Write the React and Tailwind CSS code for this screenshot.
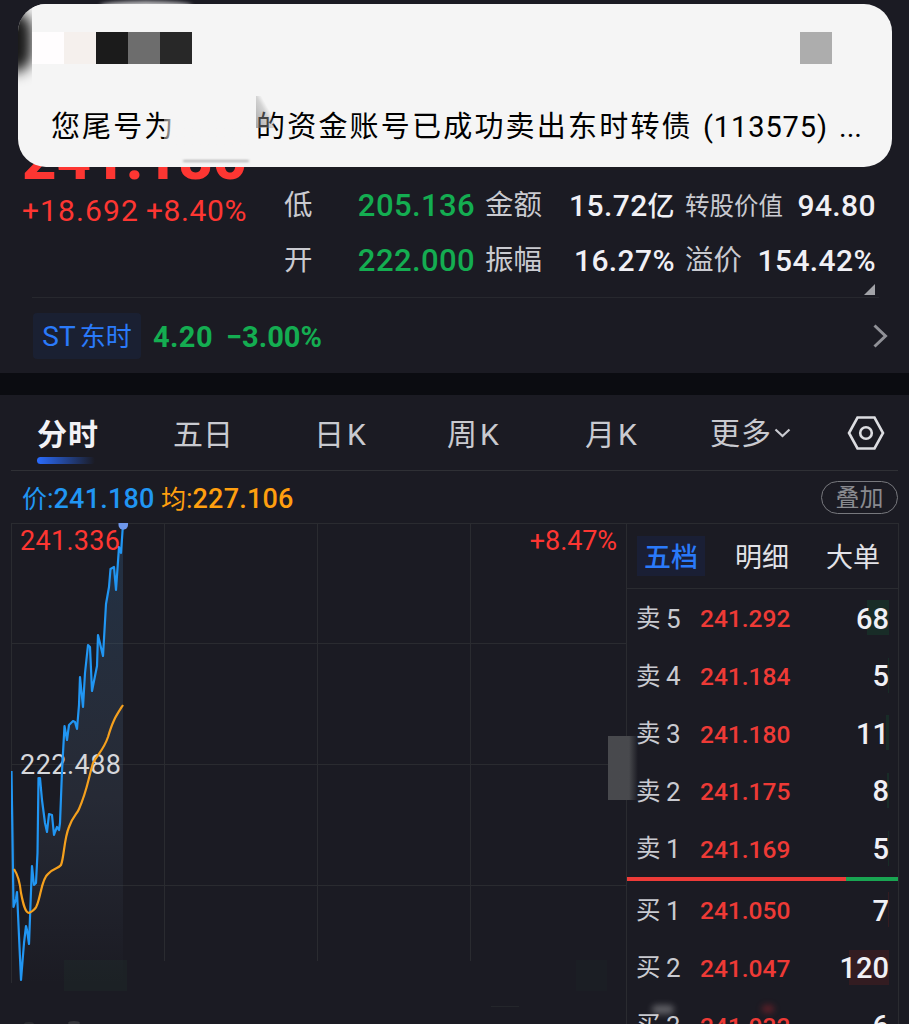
import React from 'react';
import clsx from 'clsx';

const quoteRows = [
  [
    { label: '低', value: '205.136', green: true },
    { label: '金额', value: '15.72', unit: '亿' },
    { label: '转股价值', value: '94.80', small: true },
  ],
  [
    { label: '开', value: '222.000', green: true },
    { label: '振幅', value: '16.27%' },
    { label: '溢价', value: '154.42%' },
  ],
];

const tabs = [
  { label: '分时', width: 'w-[136px]', active: true },
  { label: '五日', width: 'w-[141px]' },
  { label: '日K', width: 'w-[133px]', latin: true },
  { label: '周K', width: 'w-[138px]', latin: true },
  { label: '月K', width: 'w-[125px]', latin: true },
];

const sellOrders = [
  { side: '卖', level: 5, price: '241.292', qty: 68, depth: 22 },
  { side: '卖', level: 4, price: '241.184', qty: 5, depth: 1 },
  { side: '卖', level: 3, price: '241.180', qty: 11, depth: 3 },
  { side: '卖', level: 2, price: '241.175', qty: 8, depth: 2 },
  { side: '卖', level: 1, price: '241.169', qty: 5, depth: 1 },
];

const buyOrders = [
  { side: '买', level: 1, price: '241.050', qty: 7, depth: 1 },
  { side: '买', level: 2, price: '241.047', qty: 120, depth: 40 },
  { side: '买', level: 3, price: '241.032', qty: 6, depth: 0 },
];

// Chart coordinates are relative to the chart's top left corner
const priceLine =
  '0.5,248 2.5,384 5,376 6,369 10,457 13,420 15,403 16,407 18,421 20,368 21,343 23,362 25,360 26.5,330 27.5,255 29,255 31,277 34,300 36,309 38,291 41,292 43,312 44,309 46,304 48,307 49,300 51,248 53.5,203 56,217 58,202 62,198 64,199 66,206 68,182 69,154 72,184 74,150 77,122 79,124 81,168 86,143 87,112 92,133 95,81 98,64 99.5,46 103,44 105,67 108,24 110,30 112,1';

const averageLine =
  'M3,346 C7,352 9,360 10,370 C12,380 14,390 18,390 C22,388 25,386 26,382 C30,372 31,355 37,351 C42,345 47,346 50,342 C53,335 53,316 58,304 C62,293 66,291 68,286 C76,268 77,257 82,240 C87,231 93,226 97,214 C102,197 105,193 112,182';

const Notification = () => (
  <div className="absolute left-[18px] top-[4px] z-10 h-[163px] w-[874px] overflow-hidden rounded-[28px] bg-[#f5f5f5] text-black">
    <div className="absolute -left-[22px] top-[8px] h-[60px] w-[36px] rounded-full bg-black/90 blur-[7px]" />
    <div className="absolute left-[14px] top-0 h-[90px] w-[24px] bg-[#f5f5f5]" />
    <div className="absolute left-[165px] top-[156px] h-[1.5px] w-[66px] rounded-full bg-neutral-500/50 blur-[1px]" />
    <div className="relative flex items-start justify-between pl-[14px] pr-[60px] pt-[28px]">
      <div className="flex">
        <div className="size-8 bg-[#fffdfe]" />
        <div className="size-8 bg-[#f5f0ed]" />
        <div className="size-8 bg-[#1b1b1b]" />
        <div className="size-8 bg-[#6d6d6d]" />
        <div className="size-8 bg-[#282828]" />
      </div>
      <div className="size-8 bg-[#adadad]" />
    </div>
    <div className="relative mt-[43px] flex whitespace-nowrap pl-[33px] text-[29px] leading-[40px]">
      <span className="w-[205px] tracking-[2.1px]">您尾号为</span>
      <span className="w-[447px] tracking-[2.2px]">的资金账号已成功卖出东时转债</span>
      <span className="w-[136px] tracking-[0.9px]">(113575)</span>
      <span>...</span>
    </div>
    <div className="absolute left-[146px] top-[110px] h-[32px] w-[92px] bg-linear-to-r from-[#f5f5f5]/40 to-[#f5f5f5] to-20%" />
    <div className="absolute left-[238px] top-[92px] h-[32px] w-[18px] bg-linear-to-tr from-neutral-500/60 via-neutral-400/40 to-transparent to-65%" />
  </div>
);

const Header = () => (
  <div className="h-[373px]">
    <div className="flex h-[297px]">
      <div className="w-[284px] whitespace-nowrap pl-[22px] pt-[129px] text-[#fd3632]">
        <div className="text-[60px] font-extrabold leading-[60px]">241.180</div>
        <div className="mt-[6px] flex text-[30px] leading-8">
          <span className="w-[124px] tracking-[1.1px]">+18.692</span>
          <span className="tracking-[0.6px]">+8.40%</span>
        </div>
      </div>
      <div className="pt-[178px]">
        {quoteRows.map((row, i) => (
          <div key={i} className="grid h-[55px] grid-cols-[191px_200px_201px] text-[31px] leading-[55px]">
            {row.map((item) => (
              <div key={item.label} className="flex items-baseline justify-between whitespace-nowrap not-first:pl-[10px]">
                <span className={clsx('relative -top-px text-[#c9cad0]', item.small ? 'text-[24.5px]' : 'text-[28.5px]')}>
                  {item.label}
                </span>
                <span
                  className={clsx(
                    'font-medium',
                    item.green ? 'tracking-[0.4px] text-[#14ad51]' : 'text-[30px] tracking-[0.4px] text-[#f0f0f5]'
                  )}
                >
                  {item.value}
                  {item.unit && <span className="text-[27px]">{item.unit}</span>}
                </span>
              </div>
            ))}
          </div>
        ))}
      </div>
    </div>
    <div className="ml-8 mr-[30px] flex h-px justify-end bg-[#27282e]">
      <svg className="-mt-[13px] mr-1 size-[11px] shrink-0" viewBox="0 0 11 11">
        <path d="M11 0V11H0Z" fill="#a2a3a8" />
      </svg>
    </div>
    <div className="flex h-[75px] items-center pl-[33px] pr-[21px]">
      <div className="flex h-[46px] w-[108px] items-center justify-center gap-1 rounded bg-[#1a2032] pt-[3px] text-[26px] text-[#2a7afa]">
        <span className="text-[28px]">ST</span>
        <span>东时</span>
      </div>
      <span className="ml-3 w-[73px] pt-[2px] text-[29px] font-bold leading-[46px] tracking-[0.4px] text-[#14ad51]">4.20</span>
      <span className="pt-[2px] text-[29px] font-bold leading-[46px] text-[#14ad51]">−3.00%</span>
      <svg className="ml-auto h-[24px] w-[15px]" viewBox="0 0 15 24" fill="none" stroke="#909197" strokeWidth="3">
        <path d="M1.5 1.5L12.5 12L1.5 22.5" />
      </svg>
    </div>
  </div>
);

const TabBar = () => (
  <div className="mx-[11px] flex h-[76px] border-b border-[#2f3035] pl-[26px] text-[30px] leading-[80px] text-[#c9cad0]">
    {tabs.map((tab) => (
      <div
        key={tab.label}
        className={clsx('relative whitespace-nowrap', tab.width, tab.active && 'font-bold tracking-[1px] text-[#f2f2f6]')}
      >
        {tab.latin ? (
          <>
            {tab.label[0]}
            <span className="ml-[3px]">K</span>
          </>
        ) : (
          tab.label
        )}
        {tab.active && (
          <div className="absolute left-0 top-[62px] h-[7px] w-[58px] rounded-full bg-linear-to-r from-[#2a6cff] to-transparent" />
        )}
      </div>
    ))}
    <div className="flex w-[137px] items-center">
      <span className="pt-[3px] tracking-[1px]">更多</span>
      <svg className="ml-[2px] h-[10px] w-[17px]" viewBox="0 0 17 10" fill="none" stroke="#c9cad0" strokeWidth="2.2">
        <path d="M1.5 1.5L8.5 8L15.5 1.5" />
      </svg>
    </div>
    <svg className="mt-[20px] h-[36px] w-[38px]" viewBox="0 0 38 36" fill="none" stroke="#dcdde1" strokeWidth="2.6">
      <path d="M10.5 2.5H27.5L36 18L27.5 33.5H10.5L2 18Z" />
      <circle cx="19" cy="18" r="5.8" />
    </svg>
  </div>
);

const PriceChart = () => (
  <div className="relative w-[615px] shrink-0">
    <svg className="block h-[501px] w-[615px]" viewBox="0 0 615 501" fill="none">
      <defs>
        <linearGradient id="area" x1="0" y1="0" x2="0" y2="1">
          <stop offset="0" stopColor="#2e5c88" stopOpacity="0.34" />
          <stop offset="0.6" stopColor="#52657c" stopOpacity="0.2" />
          <stop offset="1" stopColor="#52657c" stopOpacity="0" />
        </linearGradient>
      </defs>
      <g stroke="#2a2b30" strokeWidth="1">
        <path d="M0 .5H615M0 120.5H615M0 241.5H615M0 362.5H615" />
        <path d="M.5 0V460M153.5 0V438M306.5 0V438M459.5 0V438" />
      </g>
      <rect x="53" y="437" width="63" height="31" fill="#1c2125" />
      <rect x="565" y="437" width="31" height="31" fill="#1b1e24" />
      <path d="M480 483.5H508" stroke="#24262b" />
      <polygon points={`${priceLine} 112,460 10,460`} fill="url(#area)" />
      <text x="9" y="251" fill="#d6d7db" fontSize="27" textLength="101">222.488</text>
      <polyline points={priceLine} stroke="#2196f3" strokeWidth="2.2" strokeLinejoin="round" />
      <path d={averageLine} stroke="#f5a01d" strokeWidth="2.2" />
      <path d="M107.5 0H117V2A4.6 4.6 0 0 1 107.5 2Z" fill="#6f97ea" />
      <ellipse cx="63" cy="500" rx="6" ry="2" fill="#34353a" />
      <ellipse cx="18" cy="501" rx="5" ry="2" fill="#2b2c31" />
    </svg>
    <span className="absolute left-[9px] top-px text-[27px] leading-[34px] tracking-[0.3px] text-[#fd3632]">241.336</span>
    <span className="absolute right-[9px] top-px text-[27px] leading-[34px] tracking-[-0.1px] text-[#fd3632]">+8.47%</span>
  </div>
);

const OrderRow = ({ order, sell }) => (
  <div className="flex h-[57.6px] shrink-0 items-center pl-[9px] pr-[9px]">
    <span className="w-[30px] pt-[3px] text-[24.5px] text-[#c9cad0]">{order.side}</span>
    <span className="w-[34px] pt-[3px] text-[26px] text-[#c9cad0]">{order.level}</span>
    <span className="pt-[4px] text-[24.5px] font-medium text-[#ee3a36]">{order.price}</span>
    <div className="relative ml-auto flex h-[35px] items-center">
      <div
        className={clsx('absolute inset-y-0 right-0', sell ? 'bg-[#182c27]' : 'bg-[#331c21]')}
        style={{ width: order.depth }}
      />
      <span className="relative pt-[3px] text-[29px] font-medium text-[#f0f0f5]">{order.qty}</span>
    </div>
  </div>
);

const OrderBook = () => (
  <div className="flex w-[273px] shrink-0 flex-col border-x border-t border-[#2a2b30]">
    <div className="flex h-[65px] shrink-0 items-center border-b border-[#2a2b30] pl-[10px] text-[27px] leading-[40px] text-[#e3e3e8]">
      <span className="flex h-10 w-[68px] items-center justify-center bg-[#1a1f35] pt-[3px] font-medium text-[#2a7afa]">五档</span>
      <span className="ml-[30px] w-[91px] pt-[3px]">明细</span>
      <span className="pt-[3px]">大单</span>
    </div>
    {sellOrders.map((order) => (
      <OrderRow key={order.level} order={order} sell />
    ))}
    <div className="flex h-1 shrink-0">
      <div className="w-[219px] bg-[#ee3b38]" />
      <div className="flex-1 bg-[#19a552]" />
    </div>
    {buyOrders.map((order) => (
      <OrderRow key={order.level} order={order} />
    ))}
  </div>
);

const App = () => (
  <div className="relative h-[1024px] w-[909px] overflow-hidden bg-[#1b1b23] font-[Roboto,'Noto_Sans_CJK_SC',sans-serif]">
    <div className="absolute left-[100px] top-[1px] h-[10px] w-[92px] rounded-[100%] bg-white/70 blur-[2px]" />
    <Notification />
    <Header />
    <div className="h-[22px] bg-[#0b0c11]" />
    <TabBar />
    <div className="flex h-[52px] items-center justify-between pl-[22px] pr-[11px]">
      <div className="flex items-baseline pt-[4px] text-[27px] leading-[52px]">
        <span className="w-[139px] text-[#2196f3]">
          <span className="text-[25px]">价</span>:<span className="font-medium tracking-[0.2px]">241.180</span>
        </span>
        <span className="text-[#ff9f0f]">
          <span className="text-[25px]">均</span>:<span className="font-medium tracking-[0.2px]">227.106</span>
        </span>
      </div>
      <span className="flex h-[33px] w-[77px] items-center justify-center rounded-full border border-[#77787d] pt-[2px] text-[24px] text-[#898a8f]">
        叠加
      </span>
    </div>
    <div className="flex h-[501px] overflow-hidden pl-[11px]">
      <PriceChart />
      <OrderBook />
    </div>
    <div className="absolute left-[608px] top-[736px] h-[64px] w-[30px] bg-linear-to-r from-[#48494d] from-70% to-transparent" />
    <div className="absolute left-[652px] top-[1005px] h-[9px] w-[22px] rounded-full bg-white/30 blur-[3px]" />
    <div className="absolute left-[762px] top-[1005px] h-[8px] w-[12px] rounded-full bg-red-500/30 blur-[3px]" />
  </div>
);

export default App;
